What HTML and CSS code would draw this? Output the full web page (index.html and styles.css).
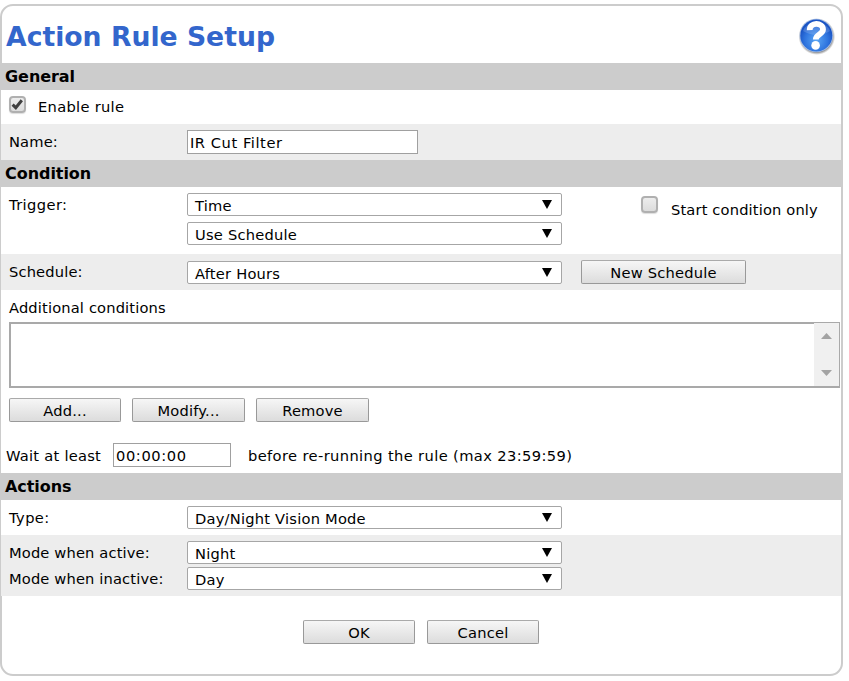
FILE: index.html
```html
<!DOCTYPE html>
<html lang="en">
<head>
<meta charset="utf-8">
<title>Action Rule Setup</title>
<link rel="stylesheet" href="styles.css">
</head>
<body>
<main class="panel">
  <header class="top">
    <h1>Action Rule Setup</h1>
    <svg class="help" width="38" height="38" viewBox="0 0 38 38" role="img" aria-label="Help">
      <defs>
        <radialGradient id="ball" cx=".5" cy=".65" r=".55">
          <stop offset="0" stop-color="#5ba6f4"/><stop offset=".65" stop-color="#2f75df"/><stop offset="1" stop-color="#1a54c4"/>
        </radialGradient>
        <radialGradient id="shade"><stop offset=".84" stop-color="#555" stop-opacity=".75"/><stop offset="1" stop-color="#888" stop-opacity="0"/></radialGradient>
      </defs>
      <circle cx="18.8" cy="19.6" r="18.4" fill="url(#shade)"/>
      <circle cx="18.3" cy="18.5" r="16.8" fill="#a9bfe4"/>
      <circle cx="18.3" cy="18.5" r="16" fill="url(#ball)"/>
      <path d="M5 14a14 12 0 0 1 27 0q-13 8-27 0z" fill="#fff" opacity=".16"/>
      <path d="M11.7 13.2C11.4 5 25 5 25 12.4C25 17.4 17.8 17.2 17.8 22.4" fill="none" stroke="#fff" stroke-width="5.8"/>
      <circle cx="17.6" cy="28.4" r="4.3" fill="#fff"/>
    </svg>
  </header>

  <h2>General</h2>
  <div class="row enable"><span class="check on"><svg width="17" height="17" viewBox="0 0 17 17"><path d="M3.6 8.6L6.8 11.7L12.8 4.3" fill="none" stroke="#404040" stroke-width="3"/></svg></span><span class="t">Enable rule</span></div>
  <div class="row name grey"><span class="label">Name:</span><span class="input wide">IR Cut Filter</span></div>

  <h2>Condition</h2>
  <div class="row trigger">
    <span class="label">Trigger:</span>
    <div class="stack">
      <div class="select"><span>Time</span><i></i></div>
      <div class="select"><span>Use Schedule</span><i></i></div>
    </div>
    <span class="check"></span><span class="t start">Start condition only</span>
  </div>
  <div class="row schedule grey"><span class="label">Schedule:</span><div class="select"><span>After Hours</span><i></i></div><span class="button new">New Schedule</span></div>
  <section class="extra">
    <div class="caption">Additional conditions</div>
    <div class="list"><div class="scroll"><i class="up"></i><i class="down"></i></div></div>
    <div class="buttons"><span class="button">Add...</span><span class="button mid">Modify...</span><span class="button mid">Remove</span></div>
    <div class="wait"><span class="before">Wait at least</span><span class="input time">00:00:00</span><span class="after">before re-running the rule (max 23:59:59)</span></div>
  </section>

  <h2>Actions</h2>
  <div class="row type"><span class="label">Type:</span><div class="select"><span>Day/Night Vision Mode</span><i></i></div></div>
  <div class="modes grey">
    <div class="row"><span class="label">Mode when active:</span><div class="select"><span>Night</span><i></i></div></div>
    <div class="row"><span class="label">Mode when inactive:</span><div class="select"><span>Day</span><i></i></div></div>
  </div>
  <footer><span class="button">OK</span><span class="button">Cancel</span></footer>
</main>
</body>
</html>
```
FILE: styles.css
```css
* { box-sizing: border-box; }
body { margin: 0; padding-top: 4px; background: #fff; color: #000; font: 14.67px/20px Verdana, "DejaVu Sans", sans-serif; letter-spacing: .15px; white-space: nowrap; }
.panel { width: 843px; height: 672px; border: 2px solid #ccc; border-radius: 13px; }
.top { display: flex; justify-content: space-between; height: 57px; padding: 11px 5px 0 4px; }
h1 { margin: 0; font-size: 26.67px; line-height: 40px; color: #3366cc; letter-spacing: 0; }
h2 { margin: 0 0 0 -1px; height: 27px; padding-left: 4px; background: #ccc; font-size: 16px; line-height: 28px; letter-spacing: -.05px; }
.row { display: flex; align-items: flex-start; margin-left: -1px; padding-left: 8px; background: #fff; }
.grey, .grey .row { background: #ededed; }
.label { width: 178px; flex: none; }
.check { width: 17px; height: 17px; flex: none; border: 2px solid #b0b0b0; border-radius: 4px; background: linear-gradient(#ededed, #dcdcdc); box-shadow: 0 1px 1px #ddd; }
.check svg { display: block; margin: -2px; }
.enable { height: 34px; padding-top: 6px; }
.enable .t { margin: 1px 0 0 12px; letter-spacing: .3px; }
.name { height: 36px; padding-top: 6px; }
.name .label { margin-top: 2px; }
.input { height: 24px; border: 1px solid #a0a0a0; background: #fff; padding: 2px 2px 0; }
.wide { width: 231px; letter-spacing: .55px; }
.select { display: flex; justify-content: space-between; width: 375px; height: 23px; flex: none; border: 1px solid #a6a6a6; border-radius: 2px; background: #fff; padding: 2px 9px 0 7px; letter-spacing: .22px; }
.select i { width: 10px; height: 9px; margin-top: 4px; background: #000; clip-path: polygon(0 0, 100% 0, 50% 100%); }
.trigger { height: 67px; padding-top: 6px; }
.trigger .label { margin-top: 2px; letter-spacing: .4px; }
.stack { display: flex; flex-direction: column; gap: 6px; }
.trigger .check { margin: 3px 0 0 79px; }
.start { margin: 7px 0 0 13px; }
.schedule { height: 36px; padding-top: 7px; }
.schedule .label { margin-top: 1px; }
.button { width: 113px; height: 24px; border: 1px solid #999; border-top-color: #aaa; border-radius: 2px; background: linear-gradient(#f6f6f6, #dcdcdc); text-align: center; line-height: 24px; letter-spacing: .2px; }
.button.new { width: 165px; margin: -1px 0 0 19px; }
.extra { height: 183px; margin-left: -1px; padding: 8px 0 0 8px; background: #fff; }
.list { width: 831px; height: 66px; margin-top: 4px; border: 2px solid #a9a9a9; display: flex; justify-content: flex-end; }
.scroll { width: 25px; height: 63px; margin: -1px -1px 0 0; background: #f0f0f0; display: flex; flex-direction: column; align-items: center; justify-content: space-between; padding: 10px 0; }
.scroll i { width: 11px; height: 6px; background: #a3a3a3; }
.up { clip-path: polygon(50% 0, 100% 100%, 0 100%); }
.down { clip-path: polygon(0 0, 100% 0, 50% 100%); }
.buttons { display: flex; gap: 11px; margin-top: 10px; }
.buttons .button:first-child { width: 112px; }
.wait { display: flex; margin: 21px 0 0 -3px; line-height: 25px; letter-spacing: .38px; }
.before { width: 107px; letter-spacing: .25px; }
.time { width: 118px; margin-right: 17px; padding-top: 0; line-height: 23px; letter-spacing: .6px; }
.type { height: 35px; padding-top: 6px; }
.type .label { margin-top: 2px; letter-spacing: .4px; }
.modes { height: 61px; margin-left: -1px; padding-top: 6px; display: flex; flex-direction: column; gap: 3px; }
.modes .row { margin-left: 0; height: 23px; }
.modes .label { margin-top: 2px; }
footer { display: flex; gap: 12px; padding: 24px 0 0 301px; }
footer .button { width: 112px; }
```
